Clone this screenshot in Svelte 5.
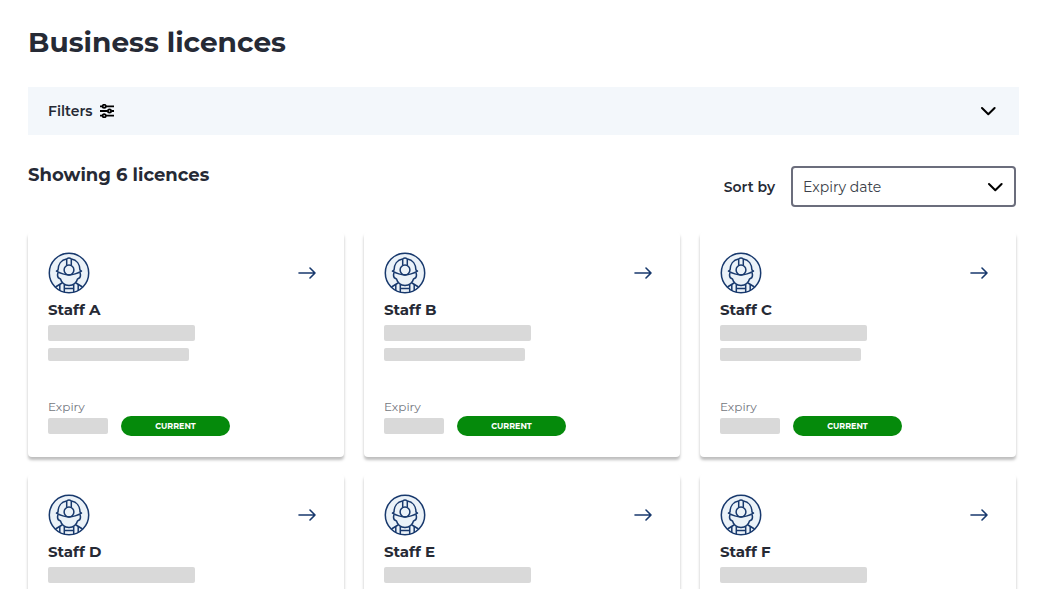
<script>
	let filtersOpen = $state(false);
	let sortBy = $state('expiry');

	const licences = [
		{ name: 'Staff A', status: 'Current' },
		{ name: 'Staff B', status: 'Current' },
		{ name: 'Staff C', status: 'Current' },
		{ name: 'Staff D', status: 'Current' },
		{ name: 'Staff E', status: 'Current' },
		{ name: 'Staff F', status: 'Current' }
	];
</script>

<main>
	<h1>Business licences</h1>

	<button class="filters" aria-expanded={filtersOpen} onclick={() => (filtersOpen = !filtersOpen)}>
		<span>Filters</span>
		<svg class="sliders" viewBox="0 0 14 14" width="14" height="14" aria-hidden="true">
			<path d="M0 2.3h2.4M6 2.3h8M0 7h7.6M11.4 7H14M0 11.7h2.4M6 11.7h8" />
			<circle cx="4.2" cy="2.3" r="1.6" />
			<circle cx="9.5" cy="7" r="1.6" />
			<circle cx="4.2" cy="11.7" r="1.6" />
		</svg>
		<svg class="chevron" class:open={filtersOpen} viewBox="0 0 16 10" width="16" height="10" aria-hidden="true">
			<path d="M2 2l6.300 6.300L14.600 2" />
		</svg>
	</button>

	<section>
		<div class="toolbar">
			<h2>Showing {licences.length} licences</h2>
			<div class="sort">
				<label for="sort">Sort by</label>
				<div class="select">
					<select id="sort" bind:value={sortBy}>
						<option value="expiry">Expiry date</option>
						<option value="name">Name</option>
					</select>
					<svg class="chevron" viewBox="0 0 16 10" width="16" height="10" aria-hidden="true">
						<path d="M2 2l6.300 6.300L14.600 2" />
					</svg>
				</div>
			</div>
		</div>

		<div class="cards">
			{#each licences as licence}
				<article class="card">
					<div class="top">
						<svg class="worker" viewBox="0 0 42 42" width="42" height="42" aria-hidden="true">
							<circle class="disc" cx="21" cy="21" r="19.700" />
							<!-- helmet -->
							<path d="M10 18.500C10 12 13.500 7.800 18.500 7M23.500 7C28.500 7.800 32 12 32 18.500" />
							<path d="M18.700 13.500V7Q21 5 23.300 7V13.500" />
							<path d="M10 18 8.500 19.200Q15 22.900 21 22.900T33.500 19.200L32 18" />
							<circle cx="21" cy="18" r="4.900" />
							<!-- face and shoulders -->
							<path d="M10 20.500l-.5 2.500q0 3.300 3 4 1.500 5.800 8.500 6.600 7-.8 8.500-6.600 3-.7 3-4l-.5-2.500" />
							<path d="M14 31 7.500 35M28 31 34.500 35" />
							<path d="M11.800 32.500v6M16.300 32.500v8M25.700 32.500v8M30.200 32.500v6M16.300 36.500h9.400" />
						</svg>
						<a href="#licence" aria-label="View {licence.name}">
							<svg viewBox="0 0 18 14" width="18" height="14" aria-hidden="true">
								<path d="M1 7H17M12 2l5 5-5 5" />
							</svg>
						</a>
					</div>
					<h3>{licence.name}</h3>
					<div class="bar title"></div>
					<div class="bar number"></div>
					<div class="expiry">Expiry</div>
					<div class="bottom">
						<div class="bar date"></div>
						<span class="badge">{licence.status}</span>
					</div>
				</article>
			{/each}
		</div>
	</section>
</main>

<style>
	:global(body) {
		margin: 0;
		background: #fff;
	}

	main {
		padding: 22px 25px 24px 28px;
		color: #262a35;
		font-family: Montserrat, Inter, sans-serif;
	}

	h1,
	h2,
	h3 {
		margin: 0;
		font-weight: 700;
	}

	h1 {
		font-size: 28px;
		line-height: 40px;
	}

	svg {
		display: block;
		fill: none;
	}

	.filters {
		display: flex;
		align-items: center;
		gap: 7px;
		width: 100%;
		height: 48px;
		margin-top: 25px;
		padding: 0 23px 0 20px;
		border: 0;
		background: #f3f7fb;
		color: inherit;
		font-family: inherit;
		font-size: 14px;
		font-weight: 600;
		cursor: pointer;
	}

	.sliders {
		stroke: #000;
		stroke-width: 1.8;
	}

	.chevron {
		stroke: #000;
		stroke-width: 2;
		stroke-linecap: round;
		stroke-linejoin: round;
	}

	.filters .chevron {
		margin-left: auto;
	}

	.chevron.open {
		transform: rotate(180deg);
	}

	section {
		padding-right: 3px;
	}

	.toolbar {
		display: flex;
		justify-content: space-between;
		align-items: flex-start;
		padding-top: 26px;
	}

	h2 {
		font-size: 18px;
		line-height: 28px;
	}

	.sort {
		display: flex;
		align-items: center;
		gap: 16px;
		padding-top: 5px;
	}

	label {
		font-size: 14px;
		font-weight: 600;
	}

	.select {
		display: grid;
		align-items: center;
		width: 225px;
	}

	.select > * {
		grid-area: 1 / 1;
	}

	.select .chevron {
		justify-self: end;
		margin-right: 13px;
		pointer-events: none;
	}

	select {
		width: 100%;
		height: 41px;
		padding: 0 36px 0 10px;
		border: 2px solid #6b6d7c;
		border-radius: 4px;
		appearance: none;
		background: #fff;
		color: #3b3f49;
		font-family: inherit;
		font-size: 14px;
	}

	.cards {
		display: grid;
		grid-template-columns: repeat(3, 1fr);
		gap: 17px 20px;
		margin-top: 25px;
	}

	.card {
		padding: 20px 28px 21px 20px;
		border-radius: 4px;
		box-shadow: 0 3px 3px rgba(0, 0, 0, 0.26);
	}

	.top {
		display: flex;
		justify-content: space-between;
		align-items: center;
	}

	.worker {
		stroke: #18396d;
		stroke-width: 1.5;
		stroke-linejoin: round;
	}

	.disc {
		fill: #ebf2f8;
	}

	a svg {
		stroke: #18396d;
		stroke-width: 1.6;
		stroke-linecap: round;
		stroke-linejoin: round;
	}

	h3 {
		margin: 6px 0 5px;
		font-size: 15px;
		line-height: 20px;
	}

	.bar {
		height: 16px;
		border-radius: 2px;
		background: #d9d9d9;
	}

	.title {
		width: 147px;
	}

	.number {
		width: 141px;
		height: 13px;
		margin-top: 7px;
	}

	.expiry {
		margin-top: 38px;
		color: #747780;
		font-size: 12px;
		line-height: 16px;
	}

	.bottom {
		display: flex;
		align-items: center;
		gap: 13px;
		margin-top: 1px;
	}

	.date {
		width: 60px;
	}

	.badge {
		width: 109px;
		border-radius: 10px;
		background: #058a0b;
		color: #fff;
		font-size: 8px;
		font-weight: 700;
		line-height: 20px;
		text-align: center;
		text-transform: uppercase;
	}
</style>
